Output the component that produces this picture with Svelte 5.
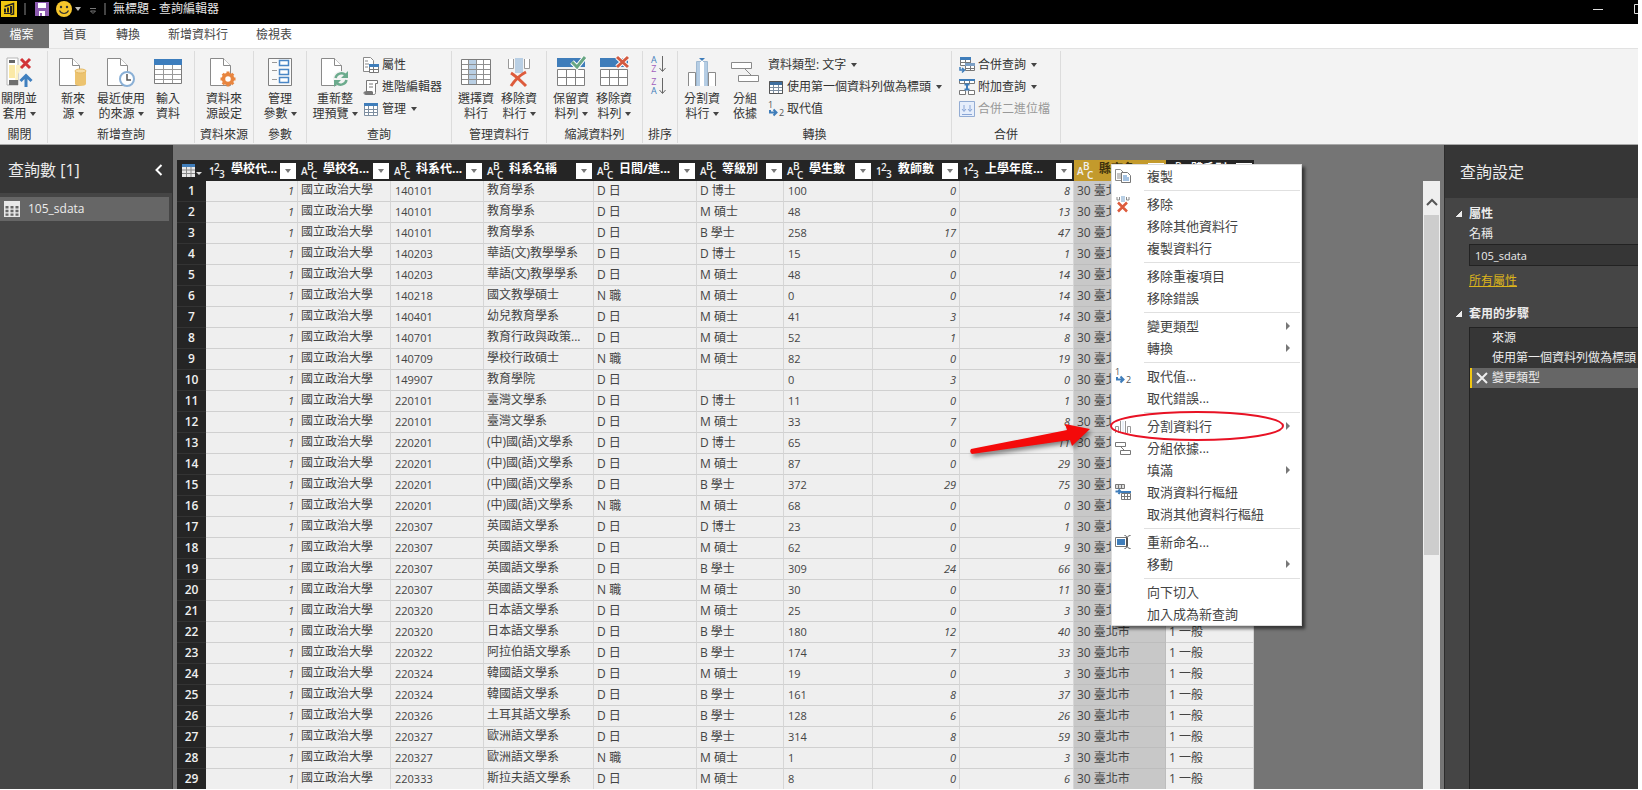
<script>
  const tabs = ['首頁', '轉換', '新增資料行', '檢視表'];

  const groups = [
    { label: '關閉', width: 48, big: [{ icon: 'apply', lines: ['關閉並', '套用'], drop: true, width: 38 }] },
    {
      label: '新增查詢', width: 147,
      big: [
        { icon: 'source', lines: ['新來', '源'], drop: true, width: 46 },
        { icon: 'recent', lines: ['最近使用', '的來源'], drop: true, width: 50 },
        { icon: 'enter', lines: ['輸入', '資料'], width: 44 }
      ]
    },
    { label: '資料來源', width: 59, big: [{ icon: 'settings', lines: ['資料來', '源設定'], width: 54 }] },
    { label: '參數', width: 53, big: [{ icon: 'params', lines: ['管理', '參數'], drop: true, width: 48 }] },
    {
      label: '查詢', width: 145,
      big: [{ icon: 'refresh', lines: ['重新整', '理預覽'], drop: true, width: 52 }],
      small: [
        { icon: 'props', text: '屬性' },
        { icon: 'script', text: '進階編輯器' },
        { icon: 'table', text: '管理', drop: true }
      ]
    },
    {
      label: '管理資料行', width: 95,
      big: [
        { icon: 'choosecol', lines: ['選擇資', '料行'], width: 44 },
        { icon: 'removecol', lines: ['移除資', '料行'], drop: true, width: 42 }
      ]
    },
    {
      label: '縮減資料列', width: 96,
      big: [
        { icon: 'keeprow', lines: ['保留資', '料列'], drop: true, width: 44 },
        { icon: 'removerow', lines: ['移除資', '料列'], drop: true, width: 42 }
      ]
    },
    { label: '排序', width: 35, sort: true },
    {
      label: '轉換', width: 274,
      big: [
        { icon: 'split', lines: ['分割資', '料行'], drop: true, width: 44 },
        { icon: 'group', lines: ['分組', '依據'], width: 42 }
      ],
      small: [
        { text: '資料類型: 文字', drop: true },
        { icon: 'firstrow', text: '使用第一個資料列做為標頭', drop: true },
        { icon: 'replace', text: '取代值' }
      ]
    },
    {
      label: '合併', width: 109,
      small: [
        { icon: 'merge', text: '合併查詢', drop: true },
        { icon: 'append', text: '附加查詢', drop: true },
        { icon: 'binary', text: '合併二進位檔', disabled: true }
      ]
    }
  ];

  const columns = [
    { title: '學校代...', type: 'num', width: 92 },
    { title: '學校名...', type: 'text', width: 93 },
    { title: '科系代...', type: 'text', width: 93 },
    { title: '科系名稱', type: 'text', width: 110 },
    { title: '日間/進...', type: 'text', width: 103 },
    { title: '等級別', type: 'text', width: 87 },
    { title: '學生數', type: 'text', width: 89 },
    { title: '教師數', type: 'num', width: 87 },
    { title: '上學年度...', type: 'num', width: 114 },
    { title: '縣市名...', type: 'text', width: 92, selected: true },
    { title: '體系別', type: 'text', width: 88 }
  ];

  const DAY = 'D 日', JOB = 'N 職';
  const PHD = 'D 博士', MA = 'M 碩士', BA = 'B 學士';
  const rows = [
    ['140101', '教育學系', DAY, PHD, 100, 0, 8],
    ['140101', '教育學系', DAY, MA, 48, 0, 13],
    ['140101', '教育學系', DAY, BA, 258, 17, 47],
    ['140203', '華語(文)教學學系', DAY, PHD, 15, 0, 1],
    ['140203', '華語(文)教學學系', DAY, MA, 48, 0, 14],
    ['140218', '國文教學碩士', JOB, MA, 0, 0, 14],
    ['140401', '幼兒教育學系', DAY, MA, 41, 3, 14],
    ['140701', '教育行政與政策...', DAY, MA, 52, 1, 8],
    ['140709', '學校行政碩士', JOB, MA, 82, 0, 19],
    ['149907', '教育學院', DAY, '', 0, 3, 0],
    ['220101', '臺灣文學系', DAY, PHD, 11, 0, 1],
    ['220101', '臺灣文學系', DAY, MA, 33, 7, 8],
    ['220201', '(中)國(語)文學系', DAY, PHD, 65, 0, 11],
    ['220201', '(中)國(語)文學系', DAY, MA, 87, 0, 29],
    ['220201', '(中)國(語)文學系', DAY, BA, 372, 29, 75],
    ['220201', '(中)國(語)文學系', JOB, MA, 68, 0, 0],
    ['220307', '英國語文學系', DAY, PHD, 23, 0, 1],
    ['220307', '英國語文學系', DAY, MA, 62, 0, 9],
    ['220307', '英國語文學系', DAY, BA, 309, 24, 66],
    ['220307', '英國語文學系', JOB, MA, 30, 0, 11],
    ['220320', '日本語文學系', DAY, MA, 25, 0, 3],
    ['220320', '日本語文學系', DAY, BA, 180, 12, 40],
    ['220322', '阿拉伯語文學系', DAY, BA, 174, 7, 33],
    ['220324', '韓國語文學系', DAY, MA, 19, 0, 3],
    ['220324', '韓國語文學系', DAY, BA, 161, 8, 37],
    ['220326', '土耳其語文學系', DAY, BA, 128, 6, 26],
    ['220327', '歐洲語文學系', DAY, BA, 314, 8, 59],
    ['220327', '歐洲語文學系', JOB, MA, 1, 0, 3],
    ['220333', '斯拉夫語文學系', DAY, MA, 8, 0, 6]
  ];

  const menu = [
    [{ text: '複製', icon: 'copy' }],
    [{ text: '移除', icon: 'menuremove' }, { text: '移除其他資料行' }, { text: '複製資料行' }],
    [{ text: '移除重複項目' }, { text: '移除錯誤' }],
    [{ text: '變更類型', sub: true }, { text: '轉換', sub: true }],
    [{ text: '取代值...', icon: 'replace' }, { text: '取代錯誤...' }],
    [
      { text: '分割資料行', icon: 'menusplit', sub: true },
      { text: '分組依據...', icon: 'menugroup' },
      { text: '填滿', sub: true },
      { text: '取消資料行樞紐', icon: 'unpivot' },
      { text: '取消其他資料行樞紐' }
    ],
    [{ text: '重新命名...', icon: 'rename' }, { text: '移動', sub: true }],
    [{ text: '向下切入' }, { text: '加入成為新查詢' }]
  ];

  const steps = ['來源', '使用第一個資料列做為標頭', '變更類型'];
</script>

{#snippet page()}
  <path d="M1.5 1.5h13l7 7v20h-20z" fill="#fff" stroke="#8a8a8a" />
  <path d="M14.5 1.5v7h7" fill="#fff" stroke="#8a8a8a" />
{/snippet}

{#snippet bigIcon(name)}
  <svg class="big-icon" viewBox="0 0 30 30" aria-hidden="true">
    {#if name === 'apply'}
      <path d="M3 1h11v27H3z" fill="#fff" stroke="#b5b5b5" />
      <path d="M5 3h6v3H5z" fill="#666" />
      <path d="M5 8h6v13H5z" fill="#fbe9a6" />
      <path d="M12 8h5v4l-3 5v10h-3z" fill="#fdf2c4" />
      <path d="M5 23h9v5H5z" fill="#6e6e6e" />
      <path d="M17 2l9 9M26 2l-9 9" stroke="#d13438" stroke-width="3" />
      <path d="M22 30V19M16.500 24l5.500-5.500 5.500 5.500" fill="none" stroke="#3f7fbf" stroke-width="3" />
    {:else if name === 'source'}
      {@render page()}
      <path d="M17 14v13c0 2.500 11 2.500 11 0V14z" fill="#ecc36f" />
      <ellipse cx="22.500" cy="14" rx="5.500" ry="2" fill="#f6dca4" stroke="#e5b75c" />
    {:else if name === 'recent'}
      {@render page()}
      <circle cx="21" cy="22" r="7" fill="#fff" stroke="#8ab0d6" stroke-width="2" />
      <path d="M21 17v6h4" fill="none" stroke="#555" stroke-width="1.500" />
    {:else if name === 'enter'}
      <path d="M1.500 2.500h27v24h-27z" fill="#fff" stroke="#7c7c7c" />
      <path d="M1 2h28v6H1z" fill="#3c7dbd" />
      <path d="M2 12.500h26M2 17.500h26M2 22.500h26M10.500 8v18M19.500 8v18" stroke="#9a9a9a" />
    {:else if name === 'settings'}
      {@render page()}
      <circle cx="19" cy="22" r="4.500" fill="#fff" stroke="#e8853f" stroke-width="3.500" />
      <path d="M19 14.500v3M19 26.500v3M11.500 22h3M23.500 22h3M13.700 16.700l2 2M22.300 25.300l2 2M13.700 27.300l2-2M22.300 18.700l2-2" stroke="#e8853f" stroke-width="3" />
    {:else if name === 'params'}
      <path d="M3.500 1.500h23v27h-23z" fill="#fafafa" stroke="#808080" />
      <path d="M14.500 3.500h9v5h-9zM14.500 12.500h9v5h-9zM14.500 20.500h9v5h-9z" fill="#fff" stroke="#4a86c5" stroke-width="1.500" />
      <path d="M7 5.500h5M7 13.500h5M7 22.500h5" stroke="#999" />
    {:else if name === 'refresh'}
      {@render page()}
      <circle cx="21" cy="22" r="8" fill="#f3f3f3" />
      <path d="M15.500 21a6 6 0 0 1 10-3M26.500 23a6 6 0 0 1-10 3" fill="none" stroke="#6cab8d" stroke-width="2.500" />
      <path d="M28 14v7h-7zM14 30v-7h7z" fill="#6cab8d" />
    {:else if name === 'choosecol'}
      <path d="M.5 2.500h29v25H.5z" fill="#fff" stroke="#7c7c7c" />
      <path d="M8 3h7v24H8z" fill="#b9cfe4" />
      <path d="M1 7.500h28M1 12.500h28M1 17.500h28M1 22.500h28M7.500 3v24M15.500 3v24M22.500 3v24" stroke="#8f8f8f" />
    {:else if name === 'removecol'}
      <path d="M4.500 2v9.500h5V2M25.500 2v9.500h-5V2" fill="#fff" stroke="#999" />
      <path d="M11 1h8v15h-8z" fill="#b9cfe4" />
      <path d="M7 16c5 3 10 8 15 13M22 15C16 18 11 23 7 29" fill="none" stroke="#dd5b3c" stroke-width="3" />
    {:else if name === 'keeprow' || name === 'removerow'}
      <path d="M1 1h28v9H1z" fill="#3f7dba" />
      <path d="M1.500 12.500h27v16h-27zM1.500 20.500h27M10.500 12v16M19.500 12v16" fill="#fff" stroke="#808080" />
      {#if name === 'keeprow'}
        <path d="M16 5l5 5 8-10" fill="none" stroke="#fff" stroke-width="5" />
        <path d="M16 5l5 5 8-10" fill="none" stroke="#68a683" stroke-width="3" />
      {:else}
        <path d="M18 0l11 10M29 0L18 10" stroke="#fff" stroke-width="5" />
        <path d="M18 0l11 10M29 0L18 10" stroke="#d35a40" stroke-width="3" />
      {/if}
    {:else if name === 'split'}
      <path d="M1.500 29V15.500h7V29M21.500 29V15.500h7V29" fill="#fff" stroke="#8a8a8a" />
      <path d="M9.500 29V4.500h11V29" fill="#fff" stroke="#9fb9d2" />
      <path d="M10 5h3v24h-3zM17 5h3v24h-3z" fill="#b5cde4" />
      <path d="M15 1v28" stroke="#fff" stroke-width="2" />
      <path d="M12 1h6l-3 3z" fill="#3f7dba" />
    {:else if name === 'group'}
      <path d="M1.500 5.500h20v6h-20zM8.500 18.500h20v6h-20z" fill="#fff" stroke="#8a8a8a" />
      <path d="M15 12l6 6" stroke="#8a8a8a" />
    {/if}
  </svg>
{/snippet}

{#snippet smallIcon(name)}
  <svg class="small-icon" viewBox="0 0 16 16" aria-hidden="true">
    {#if name === 'props'}
      <path d="M.5.5h7l3 3v11H.5z" fill="#fff" stroke="#8a8a8a" />
      <path d="M2 4h3M2 7h4M2 10h3" stroke="#888" />
      <path d="M6.500 7.500h9v8h-9zM7 12.500h8M10.500 9v6" fill="#fff" stroke="#777" />
      <path d="M6 7h10v3H6z" fill="#3f7dba" />
    {:else if name === 'script'}
      <path d="M3.500 13V1.500h11v3h-2v9c0 2-1 2-2 2h-8c-2 0-2-3 0-3h7" fill="#fff" stroke="#777" />
      <path d="M6 5h4M6 8h4" stroke="#777" />
      <path d="M1 13h9v2.500H2z" fill="#777" />
    {:else if name === 'table' || name === 'firstrow'}
      <path d="M1.500 2.500h13v12h-13zM2 8.500h12M2 11.500h12M5.500 5v9M10.500 5v9" fill="#fff" stroke="#7d8ea0" />
      {#if name === 'table'}
        <path d="M1 2h14v3H1z" fill="#3f7dba" />
      {:else}
        <path d="M2 3h12v3H2z" fill="#3f6f9f" />
        <path d="M1.500 2.500h13v12h-13z" fill="none" stroke="#555" />
      {/if}
    {:else if name === 'replace'}
      <text x="0" y="7" font-size="9" fill="#555">1</text>
      <text x="11" y="15" font-size="9" fill="#555">2</text>
      <path d="M2 9v2.500h6M5.500 8.500l3 3-3 3" fill="none" stroke="#3f7dba" stroke-width="2" />
    {:else if name === 'merge'}
      <path d="M1.500.5h10v8h-10zM2 5.500h9M6.500 3v5" fill="#fff" stroke="#777" />
      <path d="M1 0h11v3H1z" fill="#3f7dba" />
      <path d="M6.500 6.500h9v7h-9zM7 11.500h8M11.500 9v4" fill="#fff" stroke="#777" />
      <path d="M6 6h10v3H6z" fill="#7c9fc4" />
      <path d="M1 10v3h4M3 11l2.500 2L3 15.500" fill="none" stroke="#3f7dba" stroke-width="1.500" />
    {:else if name === 'append'}
      <path d="M.5 1.500h15v3H.5zM5.500 2v2M10.500 2v2" fill="#fff" stroke="#777" />
      <path d="M0 0h16v2H0z" fill="#3f7dba" />
      <path d="M.5 11.500h6v4h-6zM9.500 11.500h6v4h-6z" fill="#fff" stroke="#777" />
      <path d="M8 5v6M5.500 5.500h5M5.500 10.500h5" stroke="#3f7dba" stroke-width="2" />
    {:else if name === 'binary'}
      <path d="M.5.500h15v15H.5z" fill="#e6eefb" stroke="#93acd3" />
      <path d="M5 4v6M3 8l2 2.500L7 8M11 4v6M9 8l2 2.500L13 8M3 13.500h10" fill="none" stroke="#8aa6d6" />
    {:else if name === 'copy'}
      <path d="M.5 1.500h5l3 3v8h-8zM2 6h4M2 8h4M2 10h4" fill="#fff" stroke="#8a8a8a" />
      <path d="M6.500 4.500h6l3 3v7h-9z" fill="#fff" stroke="#777" />
      <path d="M8 8h4M8 10h6M8 12h6" stroke="#4a86c5" />
    {:else if name === 'menuremove'}
      <path d="M2 1v3h2.500V1M14 1v3h-2.500V1" fill="none" stroke="#888" />
      <path d="M6 0h4v6H6z" fill="#b9cfe4" />
      <path d="M3 6.500l9 9M12 6.500l-9 9" stroke="#dd5b3c" stroke-width="2.500" />
    {:else if name === 'menusplit'}
      <path d="M.5 15V8.500h3V15M12.500 15V8.500h3V15M5.500 15V3M10.500 15V3" fill="none" stroke="#999" />
      <path d="M8 3v12" stroke="#d5e2ef" stroke-width="1" />
    {:else if name === 'menugroup'}
      <path d="M.5 2.500h10v4H.5zM5.500 10.500h10v4h-10zM6 7l3 3" fill="#fff" stroke="#777" />
    {:else if name === 'unpivot'}
      <path d="M.5.500h9v4h-9zM3.500 1v3M6.500 1v3" fill="#ddd" stroke="#777" />
      <path d="M.500 7.500h5M3.500 5.500l2 2-2 2.500" fill="none" stroke="#3f7dba" stroke-width="2" />
      <path d="M6.500 9.500h9v6h-9zM7 12.500h8M9.500 9v6M12.500 9v6" fill="#fff" stroke="#777" />
      <path d="M6 7h10v2H6z" fill="#3f7dba" />
    {:else if name === 'rename'}
      <path d="M.5 3.500h11v9H.5z" fill="#fff" stroke="#777" />
      <path d="M2 5h8v6H2z" fill="#3f7dba" />
      <path d="M9.500 1.500c2 0 2 1 2 2v9c0 1 0 2-2 2M15.500 1.500c-2 0-3 1-3 2v9c0 1 1 2 3 2" fill="none" stroke="#555" />
    {/if}
  </svg>
{/snippet}

<div class="app">
  <header class="titlebar">
    <svg class="logo" viewBox="0 0 16 16" aria-hidden="true">
      <path d="M0 0h16v16H0z" fill="#f2c811" />
      <path d="M3.500 5.500l9-3v10.500l-3 .5" fill="none" stroke="#222" stroke-width="1.500" />
      <path d="M3 7.500h2v4H3zM6 6.500h2v5H6zM9 5h2v7H9z" fill="#222" />
      <path d="M3 12.500h7" stroke="#222" />
    </svg>
    <span class="bar"></span>
    <button class="plain save" aria-label="儲存">
      <svg viewBox="0 0 14 14"><path d="M0 0h14v14H0z" fill="#8d5bb0" /><path d="M3 1h8v5H3zM4 9h6v5H4z" fill="#fff" /><path d="M5 11h2v3H5z" fill="#8d5bb0" /></svg>
    </button>
    <button class="plain smile" aria-label="意見反應">
      <svg viewBox="0 0 16 16"><circle cx="8" cy="8" r="8" fill="#f6c62c" /><circle cx="5" cy="6" r="1.200" fill="#333" /><circle cx="11" cy="6" r="1.200" fill="#333" /><path d="M3.500 9.500c2 4 7 4 9 0" fill="none" stroke="#333" stroke-width="1.200" /></svg>
      <i class="caret light"></i>
    </button>
    <button class="plain custom" aria-label="自訂">
      <svg viewBox="0 0 8 8"><path d="M1 1.500h6M1.500 4h5L4 6.500z" fill="none" stroke="#777" /></svg>
    </button>
    <span class="bar"></span>
    <h1>無標題 - 查詢編輯器</h1>
    <div class="window-buttons">
      <button class="plain" aria-label="最小化"><svg viewBox="0 0 10 10"><path d="M0 5.500h10" stroke="#ddd" /></svg></button>
      <button class="plain" aria-label="最大化"><svg viewBox="0 0 10 10"><path d="M.5.500h9v9h-9z" fill="none" stroke="#ddd" /></svg></button>
    </div>
  </header>

  <nav class="tabs">
    <button class="tab file">檔案</button>
    {#each tabs as tab, i}
      <button class="tab" class:active={i === 0}>{tab}</button>
    {/each}
  </nav>

  <section class="ribbon">
    {#each groups as g}
      <div class="group" class:leading={g.label === '關閉'} style:width="{g.width}px">
        <div class="tools">
          {#each g.big ?? [] as b}
            <button class="big" style:width="{b.width}px">
              {@render bigIcon(b.icon)}
              <span>{b.lines[0]}</span>
              <span>{b.lines[1]}{#if b.drop}<i class="caret"></i>{/if}</span>
            </button>
          {/each}
          {#if g.small}
            <div class="small-list" class:alone={!g.big}>
              {#each g.small as s}
                <button class="small" disabled={s.disabled}>
                  {#if s.icon}{@render smallIcon(s.icon)}{/if}
                  <span>{s.text}</span>{#if s.drop}<i class="caret"></i>{/if}
                </button>
              {/each}
            </div>
          {/if}
          {#if g.sort}
            <div class="sort-list">
              {#each [['A', 'Z'], ['Z', 'A']] as pair}
                <button class="plain" aria-label="排序 {pair[0]} 到 {pair[1]}">
                  <span class="letters">
                    {#each pair as letter}<b class:first={letter === 'A'}>{letter}</b>{/each}
                  </span>
                  <svg viewBox="0 0 8 18"><path d="M4.500 1v15M1.500 13l3 3.500 3-3.500" fill="none" stroke="#666" /></svg>
                </button>
              {/each}
            </div>
          {/if}
        </div>
        <div class="group-label">{g.label}</div>
      </div>
    {/each}
  </section>

  <main class="body">
    <aside class="queries">
      <div class="pane-title">
        <h2>查詢數 [1]</h2>
        <button class="plain" aria-label="摺疊"><svg viewBox="0 0 8 12"><path d="M6.500 1l-5 5 5 5" fill="none" stroke="#fff" stroke-width="2" /></svg></button>
      </div>
      <button class="query">
        <svg viewBox="0 0 16 16" aria-hidden="true"><path d="M0 0h16v16H0z" fill="#e8e8e8" /><path d="M1.500 5h3v2.500h-3zM6.500 5h3v2.500h-3zM11.500 5h3v2.500h-3zM1.500 8.700h3v2.500h-3zM6.500 8.700h3v2.500h-3zM11.500 8.700h3v2.500h-3zM1.500 12.400h3v2.300h-3zM6.500 12.400h3v2.300h-3zM11.500 12.400h3v2.300h-3z" fill="#666" /></svg>
        105_sdata
      </button>
    </aside>

    <section class="workspace">
      <div class="grid">
        <table>
          <colgroup>
            <col style:width="29px" />
            {#each columns as c}<col style:width="{c.width}px" />{/each}
          </colgroup>
          <thead>
            <tr>
              <th class="corner">
                <button class="plain" aria-label="資料表選項">
                  <svg viewBox="0 0 20 14"><path d="M0 0h13v13H0z" fill="#e8e8e8" /><path d="M0 0h13v3H0z" fill="#3f7dba" /><path d="M0 6h13M0 9.500h13M4.500 3v10M9 3v10" stroke="#888" /><path d="M14 8h6l-3 3z" fill="#ddd" /></svg>
                </button>
              </th>
              {#each columns as c}
                <th class:selected={c.selected}>
                  <div class="head">
                    <svg class="type" viewBox="0 0 17 18" aria-hidden="true">
                      {#if c.type === 'num'}
                        <text x="0" y="13">1</text><text x="5" y="9">2</text><text x="10" y="16">3</text>
                      {:else}
                        <text x="0" y="13">A</text><text x="6" y="8">B</text><text x="10" y="17">C</text>
                      {/if}
                    </svg>
                    <span>{c.title}</span>
                    <button class="filter" aria-label="篩選 {c.title}"><i class="caret"></i></button>
                  </div>
                </th>
              {/each}
            </tr>
          </thead>
          <tbody>
            {#each rows as r, i}
              <tr>
                <th class="rownum" scope="row">{i + 1}</th>
                <td class="num">1</td>
                <td class="han">國立政治大學</td>
                <td class="code">{r[0]}</td>
                <td class="han">{r[1]}</td>
                <td>{r[2]}</td>
                <td>{r[3]}</td>
                <td class="code">{r[4]}</td>
                <td class="num">{r[5]}</td>
                <td class="num">{r[6]}</td>
                <td class="selected">30 臺北市</td>
                <td>1 一般</td>
              </tr>
            {/each}
          </tbody>
        </table>
      </div>

      <div class="scrollbar">
        <button class="plain" aria-label="向上捲動"><svg viewBox="0 0 12 8"><path d="M1 7l5-5 5 5" fill="none" stroke="#555" stroke-width="2" /></svg></button>
        <div class="thumb"></div>
      </div>

      <div class="menu" role="menu">
        {#each menu as section}
          <div class="menu-section">
            {#each section as item}
              <button class="menu-item" role="menuitem">
                <span class="menu-icon">{#if item.icon}{@render smallIcon(item.icon)}{/if}</span>
                <span>{item.text}</span>
                {#if item.sub}<i class="submenu"></i>{/if}
              </button>
            {/each}
          </div>
        {/each}
      </div>

      <svg class="callout" viewBox="0 0 320 50" aria-hidden="true">
        <path class="arrow" d="M3 41Q1 44 4 46L102 32 104 38 122 21 97 16 99 22z" fill="#f40a0a" />
        <ellipse cx="229" cy="18" rx="86" ry="14" fill="none" stroke="#e81224" stroke-width="2" />
      </svg>
    </section>

    <aside class="settings">
      <div class="pane-title"><h2>查詢設定</h2></div>
      <div class="settings-body">
        <h3><i class="fold"></i>屬性</h3>
        <label for="query-name">名稱</label>
        <input id="query-name" value="105_sdata" />
        <a href="#all">所有屬性</a>
        <h3><i class="fold"></i>套用的步驟</h3>
        <ul>
          {#each steps as s, i}
            <li class:current={i === steps.length - 1}>
              {#if i === steps.length - 1}
                <button class="plain" aria-label="刪除步驟"><svg viewBox="0 0 12 12"><path d="M1 1l10 10M11 1L1 11" stroke="#eee" stroke-width="2" /></svg></button>
              {/if}
              <span>{s}</span>
            </li>
          {/each}
        </ul>
      </div>
    </aside>
  </main>
</div>

<style>
  :global(body) { background: #fff; }
  .app, .app * { box-sizing: border-box; }
  .app {
    height: 100vh;
    display: flex;
    flex-direction: column;
    overflow: hidden;
    padding: 0 4px 1px 0;
    font: 12px/16px 'Open Sans', 'Noto Sans CJK TC', sans-serif;
    color: #444;
  }
  button { font: inherit; color: inherit; white-space: nowrap; margin: 0; }
  h1, h2, h3, ul { margin: 0; padding: 0; font-size: 12px; font-weight: normal; }
  svg { display: block; flex: none; overflow: visible; }
  svg text { font-family: 'Open Sans', sans-serif; }
  .plain { display: flex; align-items: center; padding: 0; border: 0; background: none; }
  .caret {
    display: inline-block;
    border: 3px solid transparent;
    border-top: 4px solid #444;
    border-bottom: 0;
    margin-left: 3px;
    vertical-align: 2px;
  }
  .caret.light { border-top-color: #bbb; }

  .titlebar {
    height: 24px;
    flex: none;
    display: flex;
    align-items: center;
    padding: 0 0 7px 1px;
    background: #000;
    color: #e4e4e4;
    overflow: hidden;
  }
  .logo { width: 16px; height: 16px; }
  .bar { width: 2px; height: 12px; margin: 0 7px; background: #444; }
  .logo + .bar { margin-right: 9px; }
  .save svg { width: 14px; height: 14px; }
  .smile { margin-left: 7px; }
  .smile svg { width: 16px; height: 16px; }
  .custom { margin: 4px 0 0 8px; }
  .custom svg { width: 8px; height: 8px; }
  .window-buttons { display: flex; gap: 31px; margin-left: auto; margin-right: -6px; }
  .window-buttons svg { width: 10px; height: 10px; }

  .tabs { flex: none; height: 24px; display: flex; background: #fff; padding-right: 16px; }
  .tab { padding: 0 14px 2px; border: 0; background: none; }
  .tab.file { padding: 0 8px 2px 2px; background: #707070; color: #fff; width: 49px; }
  .tab.active { background: #f3f3f3; width: 51px; padding: 0 0 2px; margin-right: 2px; }

  .ribbon {
    flex: none;
    display: flex;
    background: #f3f3f3;
    border-top: 1px solid #e2e2e2;
    border-bottom: 1px solid #a8a8a8;
    padding: 2px 0 1px;
    color: #333;
  }
  .group { flex: none; border-right: 1px solid #dcdcdc; display: flex; flex-direction: column; }
  .group.leading { padding-right: 8px; }
  .tools { display: flex; height: 76px; padding: 3px 0 0 2px; }
  .group.leading .tools { padding-left: 0; }
  .group-label { text-align: center; line-height: 16px; }
  .big {
    flex: none;
    display: flex;
    flex-direction: column;
    align-items: center;
    padding: 3px 0 0;
    border: 0;
    background: none;
    line-height: 15px;
  }
  .big-icon { width: 30px; height: 30px; margin-bottom: 4px; }
  .small-list { display: flex; flex-direction: column; padding-left: 2px; }
  .small-list.alone { padding-left: 5px; }
  .small { display: flex; align-items: center; height: 22px; gap: 3px; padding: 0; border: 0; background: none; }
  .small .caret { margin-left: 2px; }
  .small:disabled { color: #999; }
  .small-icon { width: 16px; height: 16px; }
  .sort-list { display: flex; flex-direction: column; gap: 4px; padding: 1px 0 0 6px; }
  .sort-list button { gap: 1px; }
  .sort-list svg { width: 8px; height: 18px; }
  .letters { display: flex; flex-direction: column; font: 9px/9px 'Open Sans', sans-serif; }
  .letters b { font-weight: normal; color: #a15fbd; }
  .letters b.first { color: #3f7dba; }

  .body { flex: 1; min-height: 0; display: flex; background: #757575; }
  .pane-title {
    height: 48px;
    display: flex;
    align-items: center;
    justify-content: space-between;
    background: #363636;
    color: #ececec;
    padding: 2px 9px 0 8px;
  }
  .pane-title h2 { font-size: 16px; line-height: 24px; }
  .pane-title svg { width: 8px; height: 12px; }
  .queries { flex: none; width: 173px; background: #454545; border-right: 1px solid #333; }
  .query {
    display: flex;
    align-items: center;
    gap: 8px;
    width: calc(100% - 3px);
    height: 24px;
    margin-top: 4px;
    padding: 0 4px;
    border: 0;
    background: #666;
    color: #ececec;
  }
  .query svg { width: 16px; height: 16px; }

  .workspace { position: relative; flex: 1; min-width: 0; display: flex; padding-right: 4px; overflow: hidden; }
  .grid { flex: 1; min-width: 0; overflow: hidden; padding: 15px 0 0 4px; }
  table { table-layout: fixed; border-collapse: separate; border-spacing: 0; width: 1077px; }
  th, td { height: 21px; padding: 0 3px; overflow: hidden; white-space: nowrap; text-align: left; line-height: 18px; }
  td { background: #efefef; border-right: 1px solid #d6d6d6; border-bottom: 1px solid #d0d0d0; padding-bottom: 1px; }
  td.han { padding-bottom: 2px; }
  td.code, td.num { font-size: 11px; }
  td.code { padding-left: 4px; }
  td.num { text-align: right; font-style: italic; }
  td.selected { background: #c8c8c8; border-color: #bdbdbd; }
  thead th { background: #252525; color: #fff; padding: 0 2px 0 3px; }
  thead th.selected { background: #c39a2c; color: #3a2e0c; }
  .rownum { background: #252525; color: #f0f0f0; text-align: center; font-weight: 600; border-bottom: 1px solid #333; }
  thead th.corner { padding: 0 0 0 5px; }
  .corner svg { width: 20px; height: 14px; }
  .head { display: flex; align-items: center; height: 21px; }
  .head span { flex: 1; padding-left: 5px; padding-bottom: 3px; }
  .type { width: 17px; height: 18px; }
  .type text { font-size: 10px; font-weight: 600; fill: #f0f0f0; }
  .filter { width: 16px; height: 16px; padding: 0; border: 0; background: #fff; display: flex; align-items: center; justify-content: center; }
  .filter .caret { margin: 0; border-top-color: #777; }

  .scrollbar { width: 17px; margin-top: 36px; background: #efefef; display: flex; flex-direction: column; }
  .scrollbar button { height: 34px; justify-content: center; padding-top: 8px; }
  .scrollbar svg { width: 12px; height: 8px; }
  .thumb { height: 56%; margin: 0 1px; background: #cdcdcd; }

  .menu {
    position: absolute;
    left: 938px;
    top: 19px;
    width: 191px;
    background: #fff;
    border: 1px solid #dcdcdc;
    box-shadow: 3px 3px 3px rgba(0, 0, 0, 0.55);
    font-size: 13px;
  }
  .menu-section + .menu-section { padding-top: 6px; background: linear-gradient(#e0e0e0, #e0e0e0) 32px 3px / 156px 1px no-repeat; }
  .menu-item { display: flex; align-items: center; width: 100%; height: 22px; padding: 0 11px 0 3px; border: 0; background: none; }
  .menu-icon { width: 32px; }
  .submenu { margin-left: auto; border: 4px solid transparent; border-left: 4px solid #777; border-right: 0; }
  .callout { position: absolute; left: 795px; top: 263px; width: 320px; height: 50px; pointer-events: none; }
  .arrow { filter: drop-shadow(2px 3px 2px rgba(0, 0, 0, 0.45)); }

  .settings { flex: none; width: 194px; background: #454545; border-left: 1px solid #2c2c2c; color: #ececec; display: flex; flex-direction: column; }
  .settings .pane-title { flex: none; height: 53px; padding: 0 0 0 15px; }
  .settings-body { flex: 1; display: flex; flex-direction: column; padding: 8px 0 0 24px; min-height: 0; overflow: hidden; }
  h3 { display: flex; align-items: center; font-weight: bold; line-height: 16px; margin-left: -13px; }
  .fold { width: 6px; height: 6px; margin-right: 7px; background: linear-gradient(135deg, transparent 50%, #ececec 50%); }
  label { line-height: 16px; margin: 4px 0 2px; }
  input {
    width: 100%;
    height: 22px;
    padding: 0 5px;
    font: inherit;
    font-size: 11px;
    color: #ececec;
    background: #363636;
    border: 1px solid #222;
    border-right: 0;
    border-radius: 0;
    outline: 0;
  }
  .settings a { color: #dcb41c; align-self: flex-start; margin: 7px 0 17px; }
  ul { flex: 1; margin-top: 5px; list-style: none; background: #363636; border: 1px solid #222; border-right: 0; border-bottom: 0; }
  li { display: flex; align-items: center; height: 20px; padding-left: 22px; white-space: nowrap; }
  li.current { background: #666; border-left: 2px solid #f2c811; padding-left: 4px; gap: 4px; }
  li svg { width: 12px; height: 12px; }
</style>
